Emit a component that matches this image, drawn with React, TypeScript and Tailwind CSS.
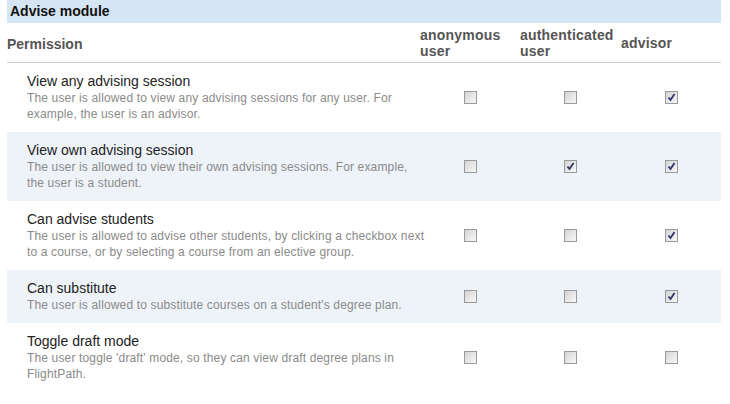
import React from "react";

interface Permission {
  title: string;
  about: string;
  roles: [boolean, boolean, boolean];
}

const permissions: Permission[] = [
  {
    title: "View any advising session",
    about: "The user is allowed to view any advising sessions for any user. For example, the user is an advisor.",
    roles: [false, false, true],
  },
  {
    title: "View own advising session",
    about: "The user is allowed to view their own advising sessions. For example, the user is a student.",
    roles: [false, true, true],
  },
  {
    title: "Can advise students",
    about: "The user is allowed to advise other students, by clicking a checkbox next to a course, or by selecting a course from an elective group.",
    roles: [false, false, true],
  },
  {
    title: "Can substitute",
    about: "The user is allowed to substitute courses on a student's degree plan.",
    roles: [false, false, true],
  },
  {
    title: "Toggle draft mode",
    about: "The user toggle 'draft' mode, so they can view draft degree plans in FlightPath.",
    roles: [false, false, false],
  },
];

const cols = "grid grid-cols-[413px_100px_101px_100px]";

// old-style grey checkbox with a navy tick
const Check: React.FC<{ on: boolean }> = ({ on }) => (
  <span className="flex h-[13px] w-[13px] items-center justify-center border border-[#9a9a9a] bg-gradient-to-br from-[#d4d4d4] to-[#f8f8f8]">
    {on && (
      <svg width="9" height="9" viewBox="0 0 9 9">
        <path d="M1.5 4.5 L3.5 7 L7.5 1" fill="none" stroke="#34366e" strokeWidth="1.9" />
      </svg>
    )}
  </span>
);

const App: React.FC = () => {
  return (
    <div className="min-h-[404px] w-[730px] bg-white pl-[7px] pr-[9px] font-['Liberation_Sans',Arial,sans-serif]">
      <div className="flex h-[23px] items-center bg-[#d5e5f3] px-[3px] text-[14px] font-bold text-[#111]">
        Advise module
      </div>

      {/* column headings */}
      <div className={`${cols} h-[40px] items-center border-b border-[#cfcfcf] text-[14px] font-bold leading-[16px] text-[#555]`}>
        <div className="pt-[3px]">Permission</div>
        <div className="tracking-[0.2px]">anonymous<br />user</div>
        <div className="tracking-[0.2px]">authenticated<br />user</div>
        <div className="tracking-[0.2px]">advisor</div>
      </div>

      {permissions.map((p, i) => (
        <div
          key={p.title}
          className={`${cols} items-center py-[10px] ${i % 2 === 1 ? "bg-[#eef3f9]" : "bg-white"}`}
        >
          <div className="w-[419px] pl-[20px]">
            <div className="text-[14px] leading-[17px] text-[#222]">{p.title}</div>
            <div className="text-[12px] leading-[16px] tracking-[0.15px] text-[#8a8a8a]">{p.about}</div>
          </div>
          {p.roles.map((on, j) => (
            <div key={j} className="flex justify-center">
              <Check on={on} />
            </div>
          ))}
        </div>
      ))}
    </div>
  );
};

export default App;
